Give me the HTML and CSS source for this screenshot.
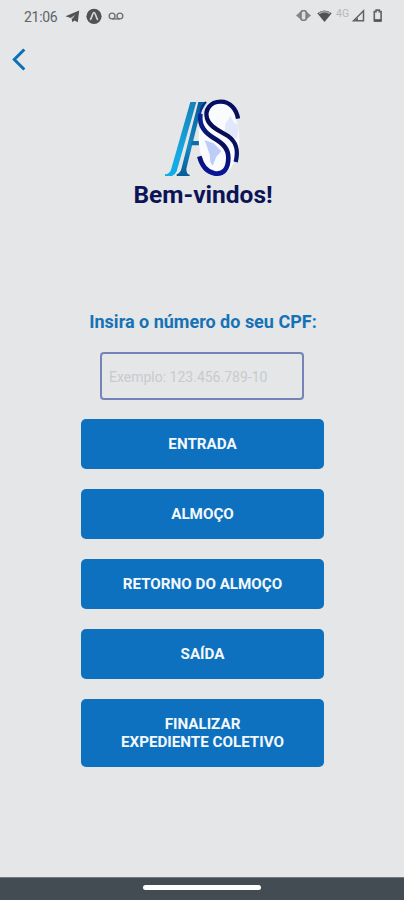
FILE: index.html
```html
<!DOCTYPE html>
<html lang="pt-BR">
<head>
<meta charset="utf-8">
<meta name="viewport" content="width=device-width, initial-scale=1">
<title>Bem-vindos!</title>
<link rel="stylesheet" href="styles.css">
</head>
<body>
<div class="screen">
  <header class="status">
    <span class="clock">21:06</span>
    <svg class="status-left" width="62" height="20" viewBox="0 0 62 20" aria-hidden="true">
      <path d="M1.5 11.2 15.2 5.5 13.8 17.2 10.5 15.5 8.4 17.2 7.5 13.3Z" fill="#505356"/>
      <path d="M6 13.3 11.5 9.7 8.1 14.1Z" fill="#c7c9cb"/>
      <circle cx="30" cy="11.3" r="7.6" fill="#505356"/>
      <path d="M26.2 14.8C28 13 28.4 7.5 30 7.5s2 5.5 3.8 7.3" fill="none" stroke="#d5d7d8" stroke-width="1.7"/>
      <g fill="none" stroke="#707375" stroke-width="1.4"><circle cx="48.1" cy="11" r="2.9"/><circle cx="55.9" cy="11" r="2.9"/><path d="M48 13.9h8"/></g>
    </svg>
    <svg class="status-wifi" width="38" height="20" viewBox="0 0 38 20" aria-hidden="true">
      <path d="M6.5 4.8 0 10.5 6.5 16ZM8.5 4.8l6.5 5.7-6.5 5.5Z" fill="#85888a"/>
      <rect x="5" y="5.8" width="5.2" height="9.4" rx="2" fill="#dcdee0" stroke="#777a7c" stroke-width="1.5"/>
      <path d="M21.3 8.3Q28.5 2.8 35.7 8.3L28.5 17Z" fill="#505356"/>
      <path d="M23 8.5Q28.5 5 34 8.5" fill="none" stroke="#a5a8aa" stroke-width="1.5"/>
    </svg>
    <span class="network">4G</span>
    <svg class="status-right" width="34" height="20" viewBox="0 0 34 20" aria-hidden="true">
      <path d="M1.5 15.8H11.5V5.7Z" fill="none" stroke="#606365" stroke-width="1.5"/>
      <path d="M1.5 16 6 12.8V16Z" fill="#606365"/>
      <path d="M22.3 6.6h1.8V5.1h3.2v1.5h1.8v9.3h-6.8Z" fill="none" stroke="#606365" stroke-width="1.6"/>
      <path d="M22.3 14.2h6.8v2.4h-6.8Z" fill="#505356"/>
    </svg>
  </header>
  <nav class="nav">
    <button class="back" aria-label="Voltar">
      <svg width="16" height="26" viewBox="0 0 16 26"><path d="M13.3 3.5 3.3 13.5 13.3 23.5" fill="none" stroke="#0b70b8" stroke-width="3"/></svg>
    </button>
  </nav>
  <main class="content">
    <svg class="logo" width="95" height="92" viewBox="0 0 285 276" role="img" aria-label="AS">
      <defs>
        <linearGradient id="light" x1="0" y1="0" x2="0" y2="1"><stop offset="0" stop-color="#1482b9"/><stop offset=".7" stop-color="#16a9e3"/><stop offset="1" stop-color="#0caee9"/></linearGradient>
        <linearGradient id="deep" x1="0" y1="0" x2="0" y2="1"><stop offset="0" stop-color="#075c9b"/><stop offset=".6" stop-color="#168ac2"/><stop offset="1" stop-color="#065b99"/></linearGradient>
        <linearGradient id="upper" x1="0" y1="0" x2="0" y2="1"><stop offset="0" stop-color="#060d67"/><stop offset=".5" stop-color="#080e4f"/><stop offset="1" stop-color="#071773"/></linearGradient>
        <linearGradient id="lower" x1="0" y1="0" x2="0" y2="1"><stop offset="0" stop-color="#0a259c"/><stop offset=".5" stop-color="#080e58"/><stop offset="1" stop-color="#071598"/></linearGradient>
      </defs>
      <path d="M106 30H124L65 238Q62 247 51 252H30V247Q44 245 48 233Z" fill="url(#light)"/>
      <path d="M130 30H155L134 68 94 230Q94 246 104 248V252H65V247Q76 243 79 231Z" fill="url(#deep)"/>
      <path d="M111 147H136L142 160H108Z" fill="#106da7"/>
      <ellipse cx="192" cy="139" rx="61" ry="109" fill="#f9fbff"/>
      <path d="M211 96 226 72 238 92 251 99 247 142 226 128 209 119Z" fill="#e2e8fb"/>
      <path d="M149 145 176 154 199 178 184 194 173 221 166 211 164 187Z" fill="#bdcdf7"/>
      <path d="M153 30Q133 48 136 74" fill="none" stroke="#0a2d91" stroke-width="6"/>
      <path d="M249 80C245 52 226 29 197 29C165 29 149 54 156 79C164 106 195 116 219 132C249 153 249 181 242 210" fill="none" stroke="url(#upper)" stroke-width="13"/>
      <path d="M136 65C132 104 151 123 176 138C204 154 220 170 220 197C220 231 205 249 178 244C153 239 139 216 133 193" fill="none" stroke="url(#lower)" stroke-width="14"/>
    </svg>
    <h1 class="title">Bem-vindos!</h1>
    <form class="form">
      <label class="label" for="cpf">Insira o número do seu CPF:</label>
      <input class="field" id="cpf" type="text" placeholder="Exemplo: 123.456.789-10">
      <div class="actions">
        <button class="action" type="button">ENTRADA</button>
        <button class="action" type="button">ALMOÇO</button>
        <button class="action" type="button">RETORNO DO ALMOÇO</button>
        <button class="action" type="button">SAÍDA</button>
        <button class="action action-tall" type="button">FINALIZAR<br>EXPEDIENTE COLETIVO</button>
      </div>
    </form>
  </main>
  <footer class="system-bar"><span class="handle"></span></footer>
</div>
</body>
</html>
```
FILE: styles.css
```css
* { box-sizing: border-box; }
body { margin: 0; background: #e4e6e8; font-family: Roboto, sans-serif; }
button, input { font-family: inherit; }
.screen { width: 404px; height: 900px; display: flex; flex-direction: column; overflow: hidden; }
.status { height: 32px; flex: none; display: flex; align-items: flex-start; padding: 5px 18px 0 24px; color: #606366; }
.clock { width: 40px; font-size: 14px; line-height: 24px; letter-spacing: -.3px; white-space: nowrap; }
.status svg { flex: none; }
.status-wifi { margin-left: auto; }
.network { width: 16px; margin-left: 1px; font-size: 10.5px; line-height: 17px; color: #b5b8ba; }
.status .status-wifi { margin-right: 1px; }
.nav { height: 60px; flex: none; padding: 14px 0 0 11px; }
.back { display: block; padding: 0; border: 0; background: transparent; height: 26px; }
.back svg { display: block; }
.content { flex: 1; display: flex; flex-direction: column; align-items: center; }
.logo { display: block; flex: none; }
.title { margin: -5px -2px 0 0; font-size: 24.5px; line-height: 32px; font-weight: 700; color: #0d1456; }
.form { margin-top: 101px; display: flex; flex-direction: column; align-items: center; }
.label { margin-right: -2px; font-size: 18px; line-height: 20px; font-weight: 700; color: #1672b5; white-space: nowrap; }
.field { width: 204px; height: 48px; margin-top: 20px; padding: 2px 7px 0; border: 2px solid #7583b9; border-radius: 4px; background: transparent; font-size: 14px; color: #555; outline: none; }
.field::placeholder { color: #c8cbcd; opacity: 1; }
.actions { width: 243px; margin-top: 18.5px; display: flex; flex-direction: column; gap: 19.5px; }
.action { height: 50.5px; padding: 1px 0 0 1px; border: 0; border-radius: 5px; background: #0d71bf; color: #f3f8fc; font-size: 15.2px; line-height: 18px; font-weight: 700; }
.action-tall { height: 68.5px; }
.system-bar { height: 23px; flex: none; display: flex; justify-content: center; padding-top: 7px; background: #444c53; border-top: 1px solid #73797c; }
.handle { width: 118px; height: 5px; border-radius: 3px; background: #fff; }
```
